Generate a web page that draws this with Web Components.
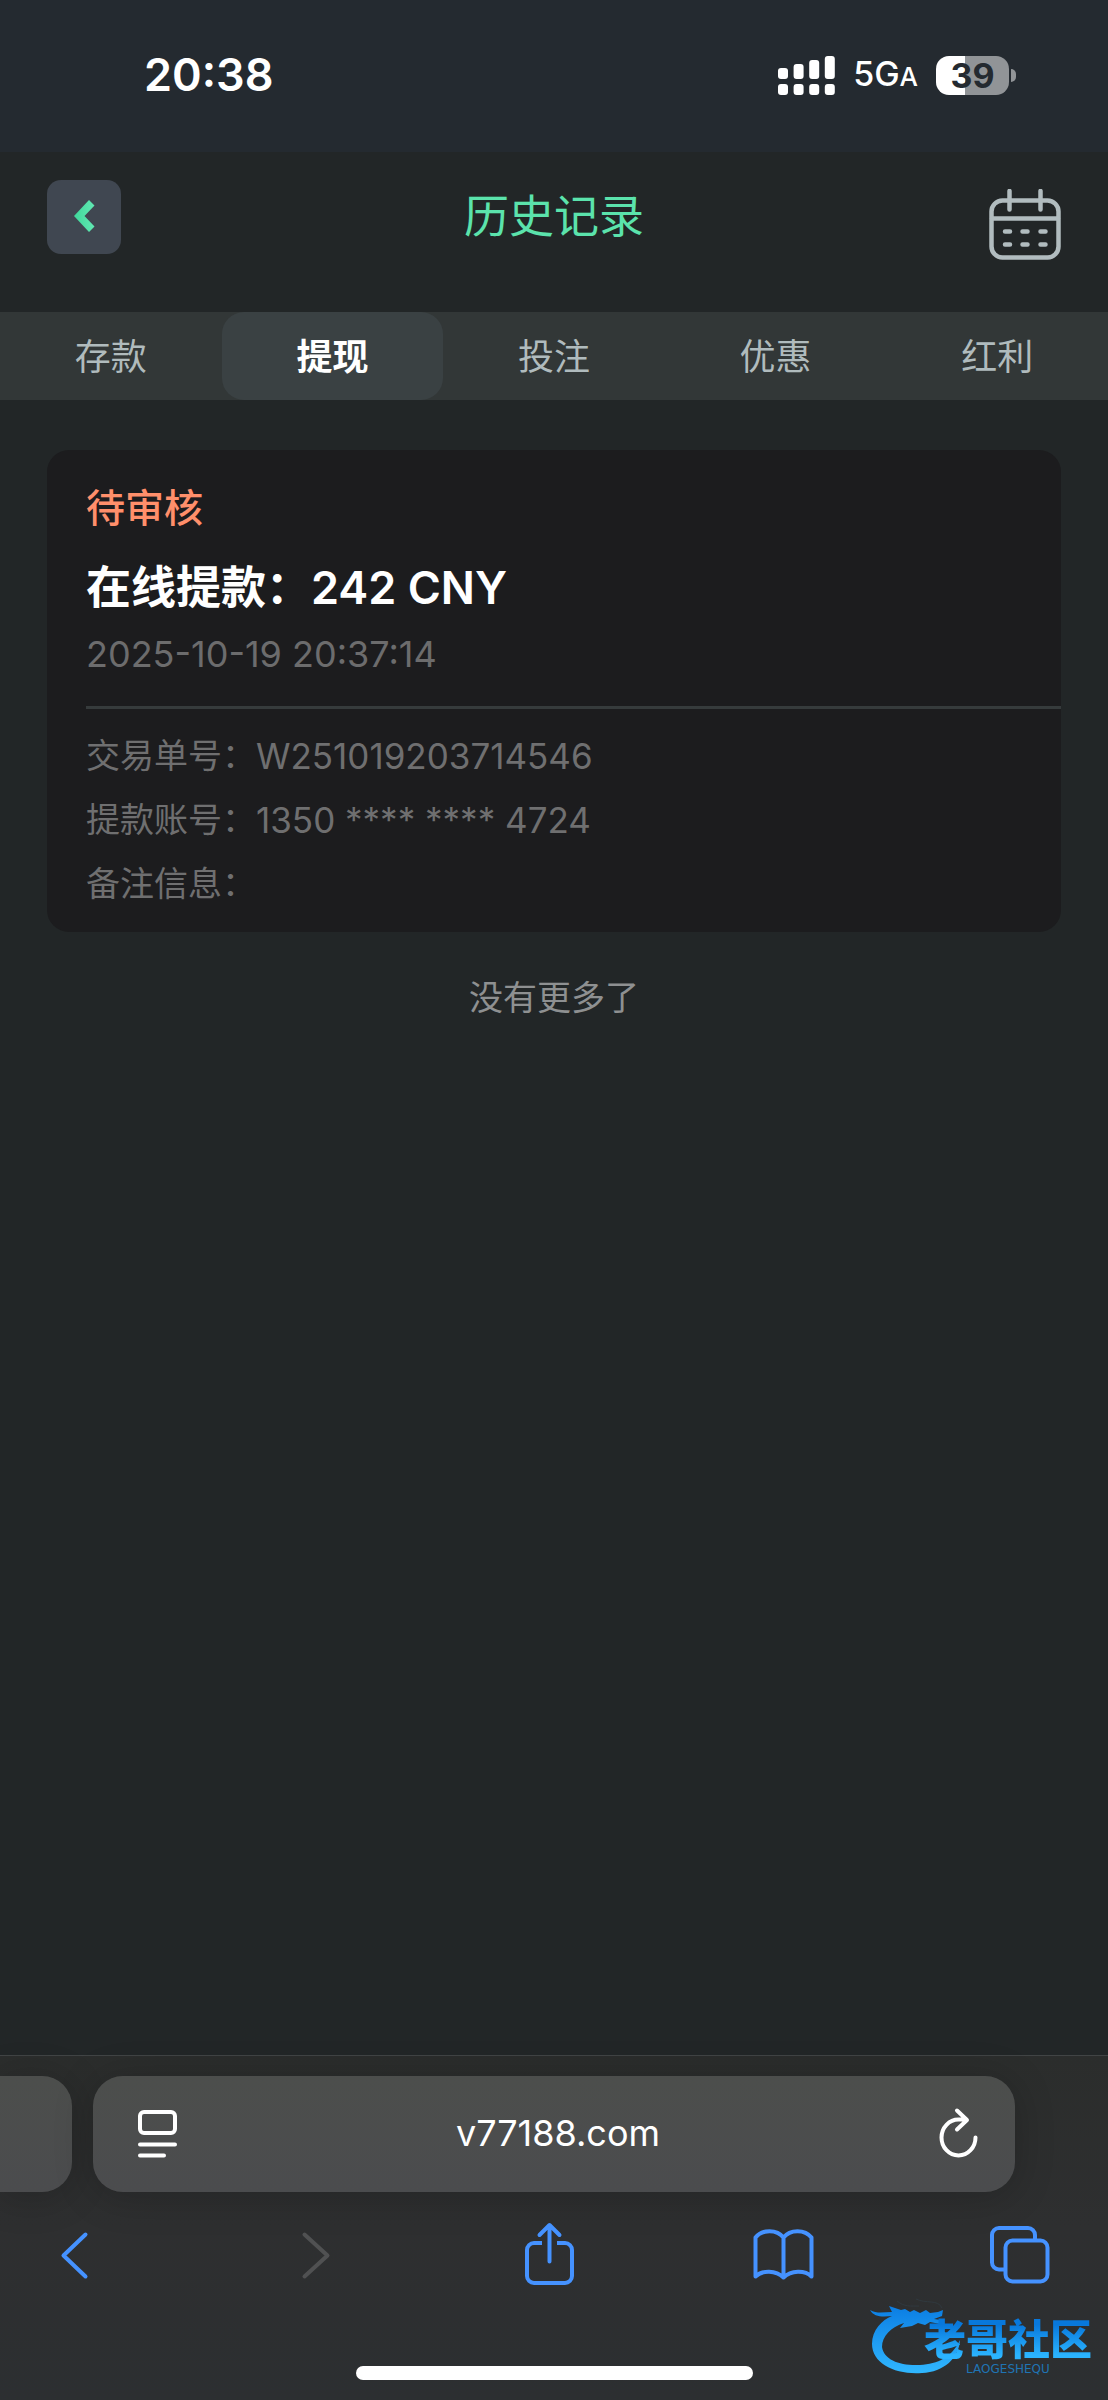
<!DOCTYPE html>
<html lang="zh-CN">
<head>
<meta charset="utf-8">
<meta name="viewport" content="width=device-width, initial-scale=1">
<title>历史记录</title>
<style>
    body {
        margin: 0;
        background-color: #222627;
        color: #fff;
        font-family: Inter, "Noto Sans CJK SC", sans-serif;
    }
</style>
</head>
<body>
<history-app></history-app>

<script>
// Small helper, every element clones its own template into an open root
function attach(element, html) {
    const template = document.createElement('template')
    template.innerHTML = html
    const shadowRoot = element.attachShadow({mode: "open"})
    shadowRoot.appendChild(template.content.cloneNode(true))
    return shadowRoot
}

// Status bar
class StatusBar extends HTMLElement {
    constructor() {
        super();
        attach(this, `
<style>
    :host {
        display: flex;
        align-items: center;
        justify-content: space-between;
        height: 150px;
        padding: 0 92px 2px 144px;
        background-color: #242a30;
    }
    time {
        font-size: 45px;
        font-weight: 600;
        line-height: 56px;
    }
    .right {
        display: flex;
        align-items: center;
    }
    .network {
        margin: 0 18px;
        font-size: 34px;
        font-weight: 500;
        line-height: 40px;
    }
    .network small {
        font-size: 26px;
    }
    .battery {
        display: flex;
        align-items: center;
        gap: 2px;
    }
    .level {
        width: 73px;
        height: 39px;
        border-radius: 13px;
        background: linear-gradient(90deg, #fff 40%, #919497 40%);
        color: #242a30;
        font-size: 34px;
        font-weight: 700;
        line-height: 39px;
        text-align: center;
    }
    .nub {
        width: 5px;
        height: 13px;
        border-radius: 0 5px 5px 0;
        background-color: #919497;
    }
</style>
<time>20:38</time>
<div class="right">
    <svg width="57" height="39" viewBox="0 0 57 39" fill="#fff" aria-hidden="true">
        <rect x="0" y="12" width="10" height="11" rx="3"/>
        <rect x="15.6" y="8" width="10" height="15" rx="3"/>
        <rect x="31.2" y="4" width="10" height="19" rx="3"/>
        <rect x="46.8" y="0" width="10" height="23" rx="3"/>
        <rect x="0" y="28" width="10" height="11" rx="3"/>
        <rect x="15.6" y="28" width="10" height="11" rx="3"/>
        <rect x="31.2" y="28" width="10" height="11" rx="3"/>
        <rect x="46.8" y="28" width="10" height="11" rx="3"/>
    </svg>
    <span class="network">5G<small>A</small></span>
    <div class="battery"><div class="level">39</div><div class="nub"></div></div>
</div>
`)
    }
}

// Page header
class PageHeader extends HTMLElement {
    constructor() {
        super();
        attach(this, `
<style>
    :host {
        display: grid;
        grid-template-columns: 74px 1fr 74px;
        grid-template-rows: 74px;
        padding: 28px 47px 58px;
    }
    button {
        padding: 0;
        border: 0;
        background: none;
        cursor: pointer;
    }
    svg {
        display: block;
    }
    .back {
        border-radius: 14px;
        background-color: #404751;
    }
    .calendar {
        height: 80px;
        padding: 9px 0 0 2px;
    }
    h1 {
        margin: 0;
        color: #5be3ac;
        font-size: 45px;
        font-weight: 400;
        line-height: 74px;
        text-align: center;
    }
</style>
<button class="back" aria-label="返回">
    <svg width="74" height="74" viewBox="0 0 74 74">
        <defs><linearGradient id="g"><stop offset="0" stop-color="#3fd79a"/><stop offset="1" stop-color="#62e8b3"/></linearGradient></defs>
        <path d="M42 20 L47.500 25.500 L37.500 36 L47.500 46.500 L42 52 L27 36z" fill="url(#g)"/>
    </svg>
</button>
<h1><slot></slot></h1>
<button class="calendar" aria-label="日期">
    <svg width="72" height="71" viewBox="0 0 72 71" fill="none" stroke="#b1bcbf" stroke-width="4.500" stroke-linecap="round">
        <rect x="2.500" y="11.500" width="67" height="57" rx="11"/>
        <path d="M3 29.500h66M20.500 2v18.500M51.500 2v18.500"/>
        <path d="M16 42.500h5M33.500 42.500h5M51.500 42.500h5M16 55.500h5M33.500 55.500h5M51.500 55.500h5"/>
    </svg>
</button>
`)
    }
}

// Tabs
class HistoryTabs extends HTMLElement {
    constructor() {
        super();
        const shadowRoot = attach(this, `
<style>
    :host {
        display: block;
        background-color: #323737;
    }
    .tabs {
        display: grid;
        grid-template-columns: repeat(5, 1fr);
    }
    button {
        height: 88px;
        padding: 0 0 4px;
        border: 0;
        border-radius: 22px;
        background: none;
        color: #b0bbbd;
        font: inherit;
        font-size: 36px;
        cursor: pointer;
    }
    button[aria-selected="true"] {
        background-color: #3a4143;
        color: #fff;
        font-weight: 600;
    }
</style>
<div class="tabs" role="tablist"></div>
`)
        //Bind
        this.onClickTab = this.onClickTab.bind(this)

        this.tabs = ['存款', '提现', '投注', '优惠', '红利']
        this.tabsElement = shadowRoot.querySelector('.tabs')
        this.tabs.forEach((tab, index) => {
            const button = document.createElement('button')
            button.textContent = tab
            button.setAttribute('role', 'tab')
            button.setAttribute('aria-selected', index === 1)
            this.tabsElement.appendChild(button)
        })
        this.tabsElement.addEventListener('click', this.onClickTab)
    }

    onClickTab(event) {
        const clicked = event.target.closest('button')
        if (!clicked) return
        this.tabsElement.querySelectorAll('button').forEach((button) => {
            button.setAttribute('aria-selected', button === clicked)
        })
    }
}

// One withdrawal
class RecordCard extends HTMLElement {
    constructor() {
        super();
        attach(this, `
<style>
    :host {
        display: block;
        padding: 30px 0 16px 39px;
        border-radius: 22px;
        background-color: #1c1c1e;
    }
    .status {
        color: #ff8f6b;
        font-size: 39px;
        font-weight: 500;
        line-height: 56px;
    }
    h2 {
        margin: 20px 0 10px;
        font-size: 45px;
        font-weight: 600;
        line-height: 64px;
    }
    .date {
        color: #6c6c6d;
        font-size: 36px;
        line-height: 48px;
    }
    .details {
        margin-top: 28px;
        padding-top: 15px;
        border-top: 3px solid #363b3c;
    }
</style>
<div class="status"><slot name="status"></slot></div>
<h2><slot name="title"></slot></h2>
<div class="date"><slot name="date"></slot></div>
<div class="details"><slot></slot></div>
`)
    }
}

class RecordRow extends HTMLElement {
    constructor() {
        super();
        attach(this, `
<style>
    :host {
        display: flex;
        color: #6f6f70;
        font-size: 35px;
        line-height: 64px;
    }
    .label {
        min-width: 170px;
        font-size: 34px;
    }
</style>
<span class="label"><slot name="label"></slot></span>
<span><slot></slot></span>
`)
    }
}

// Browser chrome at the bottom
class BrowserBar extends HTMLElement {
    constructor() {
        super();
        attach(this, `
<style>
    :host {
        display: block;
        border-top: 1px solid #414445;
        background: linear-gradient(#2b2d2c, #2e2f30 50%, #2c2f31);
    }
    .address {
        display: flex;
        gap: 21px;
        padding: 20px 93px 0 0;
    }
    .peek, .field {
        height: 116px;
        background: linear-gradient(#4c4e4c, #4b4c4e);
        box-shadow: 0 4px 40px rgba(0, 0, 0, 0.2);
    }
    .peek {
        width: 72px;
        border-radius: 0 30px 30px 0;
    }
    .field {
        flex: 1;
        display: flex;
        align-items: center;
        box-sizing: border-box;
        padding: 0 35px 2px 43px;
        border-radius: 30px;
    }
    input {
        flex: 1;
        min-width: 0;
        padding: 0;
        border: 0;
        background: none;
        color: #fff;
        font: inherit;
        font-size: 36px;
        text-align: center;
    }
    button {
        padding: 0;
        border: 0;
        background: none;
        color: #4592ff;
        cursor: pointer;
    }
    button:disabled {
        color: #505152;
    }
    .field button {
        color: #fff;
    }
    svg {
        display: block;
        fill: none;
        stroke: currentColor;
        stroke-width: 4;
        stroke-linecap: round;
        stroke-linejoin: round;
    }
    .tools {
        display: flex;
        justify-content: space-between;
        padding: 30px 57px 0 42px;
    }
    .home {
        width: 397px;
        height: 14px;
        margin: 80px auto 0;
        padding: 0;
        border-radius: 7px;
        background-color: #fff;
    }
    .bottom {
        padding-bottom: 20px;
    }
</style>
<div class="address">
    <div class="peek"></div>
    <div class="field">
        <button aria-label="页面设置">
            <svg width="44" height="52" viewBox="0 0 44 52">
                <rect x="4" y="5" width="35" height="21" rx="4"/>
                <path d="M4 37.500h35M4 48.500h24"/>
            </svg>
        </button>
        <input type="text" value="v77188.com" aria-label="地址">
        <button aria-label="重新载入">
            <svg width="44" height="52" viewBox="0 0 44 52">
                <path d="M39.500 30.500a17 18 0 1 1-17-18h8M21 3.500l10 9.500-10 9.500"/>
            </svg>
        </button>
    </div>
</div>
<div class="tools">
    <button aria-label="后退"><svg width="64" height="64" viewBox="0 0 64 64"><path d="M43.500 12.500 L21.500 33.500 L43.500 54.500"/></svg></button>
    <button aria-label="前进" disabled><svg width="64" height="64" viewBox="0 0 64 64"><path d="M26.500 12.500 L49.500 33.500 L26.500 54.500"/></svg></button>
    <button aria-label="分享"><svg width="64" height="64" viewBox="0 0 64 64">
        <path d="M27 21h-8a7 7 0 0 0-7 7v26a7 7 0 0 0 7 7h31a7 7 0 0 0 7-7V28a7 7 0 0 0-7-7h-8" stroke-linecap="butt"/>
        <path d="M34.500 39.500V3.500M24.500 13 L34.500 3 L44.500 13"/>
    </svg></button>
    <button aria-label="书签"><svg width="64" height="64" viewBox="0 0 64 64">
        <path d="M32.500 15.500C26 7 11 7 4.500 15.500V54.500C11 48 25 48 32.500 55.500C40 48 54 48 60.500 54.500V15.500C54 7 39 7 32.500 15.500V55.500"/>
    </svg></button>
    <button aria-label="标签页"><svg width="64" height="64" viewBox="0 0 64 64">
        <path d="M17 47.500h-5a7 7 0 0 1-7-7V13a7 7 0 0 1 7-7h29a7 7 0 0 1 7 7v5" stroke-linecap="butt"/>
        <rect x="18.500" y="18.500" width="42" height="41" rx="7"/>
    </svg></button>
</div>
<div class="bottom"><div class="home"></div></div>
`)
    }
}

// Community logo laid over the corner
class CommunityLogo extends HTMLElement {
    constructor() {
        super();
        attach(this, `
<style>
    :host {
        position: absolute;
        right: 16px;
        bottom: 22px;
        display: flex;
        justify-content: space-between;
        width: 222px;
        height: 82px;
    }
    svg {
        display: block;
    }
    .words {
        position: absolute;
        top: 22px;
        right: 0;
        text-align: center;
    }
    .name {
        background: linear-gradient(#0878dc 15%, #2bb4ff 85%);
        -webkit-background-clip: text;
        background-clip: text;
        color: transparent;
        font-size: 42px;
        font-weight: 900;
        line-height: 44px;
    }
    .latin {
        color: #1f74b4;
        font-family: "DejaVu Sans", sans-serif;
        font-size: 12px;
        line-height: 14px;
    }
</style>
<svg width="92" height="82" viewBox="0 0 92 82" aria-hidden="true">
    <defs><linearGradient id="d" x1="0" y1="0" x2="0" y2="1"><stop offset="0" stop-color="#0b7de3"/><stop offset="1" stop-color="#30b7ff"/></linearGradient></defs>
    <path fill="url(#d)" d="M0 14C7 18 14 16 22 16L19 10L31 14L35 13L40 16L44 14L50 17L56 14L60 17L68 16L73 14L72 20L64 23L71 24L70 28L60 26L55 29L48 27L42 30L30 32L34 27C21 31 12 40 12 51C14 64 30 70 50 69C68 68 82 61 90 44C89 62 74 76 52 77C26 79 2 68 2 48C2 34 12 24 22 20C12 21 4 21 0 14z"/>
    <path fill="none" stroke="#30393f" stroke-width="1" d="M27 5c7 6 14 5 22 5M46 3c10 5 22 0 26 9"/>
</svg>
<div class="words">
    <div class="name">老哥社区</div>
    <div class="latin">LAOGESHEQU</div>
</div>
`)
    }
}

// App
class HistoryApp extends HTMLElement {
    constructor() {
        super();
        attach(this, `
<style>
    :host {
        position: relative;
        display: flex;
        flex-direction: column;
        min-height: 100vh;
    }
    main {
        flex: 1;
        padding: 50px 47px;
    }
    .end {
        margin: 42px 0 0;
        color: #8e9091;
        font-size: 34px;
        line-height: 48px;
        text-align: center;
    }
</style>
<status-bar></status-bar>
<page-header>历史记录</page-header>
<history-tabs></history-tabs>
<main>
    <record-card>
        <span slot="status">待审核</span>
        <span slot="title">在线提款：242 CNY</span>
        <span slot="date">2025-10-19 20:37:14</span>
        <record-row><span slot="label">交易单号：</span>W251019203714546</record-row>
        <record-row><span slot="label">提款账号：</span>1350 **** **** 4724</record-row>
        <record-row><span slot="label">备注信息：</span></record-row>
    </record-card>
    <p class="end">没有更多了</p>
</main>
<browser-bar></browser-bar>
<community-logo></community-logo>
`)
    }
}

//
window.customElements.define('status-bar', StatusBar)
window.customElements.define('page-header', PageHeader)
window.customElements.define('history-tabs', HistoryTabs)
window.customElements.define('record-row', RecordRow)
window.customElements.define('record-card', RecordCard)
window.customElements.define('browser-bar', BrowserBar)
window.customElements.define('community-logo', CommunityLogo)
window.customElements.define('history-app', HistoryApp)
</script>
</body>
</html>
